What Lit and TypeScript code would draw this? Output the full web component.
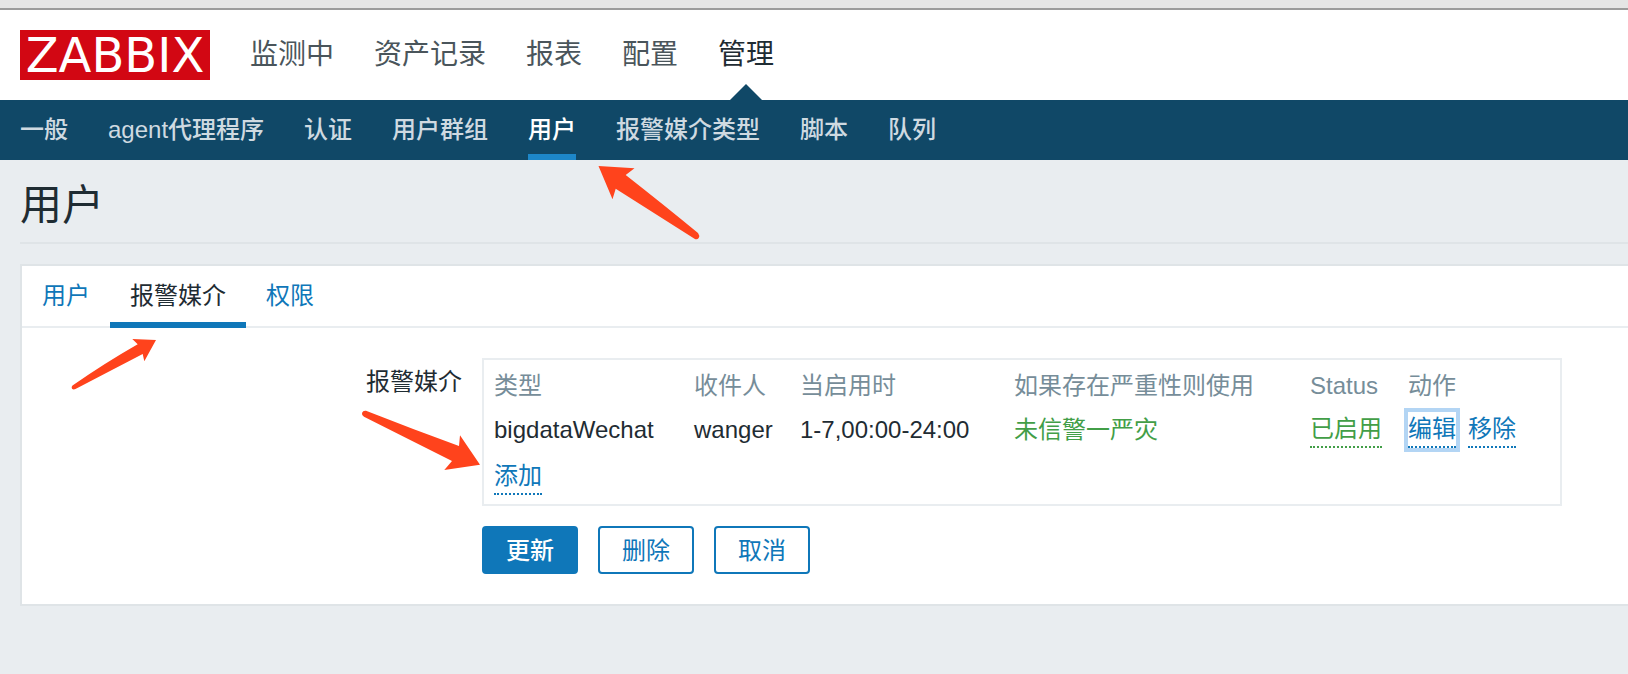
import { LitElement, html, css } from "lit";
import { customElement } from "lit/decorators.js";
import { classMap } from "lit/directives/class-map.js";

const MAIN = ["监测中", "资产记录", "报表", "配置", "管理"];
const SUB = ["一般", "agent代理程序", "认证", "用户群组", "用户", "报警媒介类型", "脚本", "队列"];
const TABS = ["用户", "报警媒介", "权限"];

@customElement("app-root")
export class AppRoot extends LitElement {
  static styles = css`
    :host {
      display: block;
      position: relative;
      min-height: 100vh;
      overflow: hidden;
      background: #e9edf0;
      color: #1f2c33;
      font: 24px/32px "Liberation Sans", "Noto Sans CJK SC", sans-serif;
    }
    * { box-sizing: border-box; }
    a { color: inherit; text-decoration: none; }
    .chrome { height: 10px; background: #e5e5e5; border-bottom: 2px solid #9b9b9b; }
    .header {
      display: flex;
      align-items: center;
      gap: 40px;
      height: 90px;
      padding: 0 20px;
      background: #fff;
    }
    .logo {
      width: 190px;
      height: 50px;
      background: #d20713;
      color: #fff;
      font: 48px/50px "DejaVu Sans", sans-serif;
      text-align: center;
    }
    .main { display: flex; gap: 40px; height: 90px; font-size: 28px; line-height: 90px; color: #4a555b; }
    .main .on { position: relative; color: #1f2c33; }
    .main .on::after {
      content: "";
      position: absolute;
      left: 50%;
      bottom: 0;
      margin-left: -16px;
      border: 16px solid transparent;
      border-top: 0;
      border-bottom-color: #104867;
    }
    .sub {
      display: flex;
      gap: 40px;
      height: 60px;
      padding: 0 20px;
      background: #104867;
      color: #cfdae1;
      font-weight: 500;
      line-height: 60px;
      white-space: nowrap;
    }
    .sub .on { color: #fff; border-bottom: 6px solid #1d87c9; }
    .title {
      margin: 0 0 20px 20px;
      padding: 16px 0 6px;
      border-bottom: 2px solid #dfe4e7;
      font-size: 42px;
      line-height: 60px;
      font-weight: 400;
    }
    .panel {
      margin-left: 20px;
      background: #fff;
      border: 2px solid #dfe4e7;
      border-right: 0;
    }
    .tabs { display: flex; height: 62px; border-bottom: 2px solid #e9edf0; color: #0f77b9; }
    .tab { height: 62px; padding: 0 20px; line-height: 60px; }
    .tab.on { color: #1f2c33; border-bottom: 6px solid #0f77b9; }
    .form {
      display: grid;
      grid-template-columns: 440px 1fr;
      column-gap: 20px;
      row-gap: 20px;
      padding: 30px 66px 30px 0;
    }
    .label { padding-top: 8px; text-align: right; }
    .box { border: 2px solid #e9edf0; padding: 4px 0 2px 10px; }
    table { width: 100%; border-collapse: collapse; table-layout: fixed; }
    th, td { padding: 0; text-align: left; font-weight: 400; height: 44px; white-space: nowrap; }
    th { color: #768d99; }
    td.add { height: 50px; }
    .c1 { width: 200px; }
    .c2 { width: 106px; }
    .c3 { width: 214px; }
    .c4 { width: 296px; }
    .c5 { width: 98px; }
    .green { color: #429e47; }
    .act {
      display: block;
      padding: 0;
      border: 0;
      border-bottom: 2px dotted currentColor;
      background: none;
      color: #0f77b9;
      font: inherit;
      line-height: 34px;
      outline: 0;
    }
    .act.green { color: #429e47; }
    .act.focus { box-shadow: 0 0 0 4px #b3d5f4; }
    .acts { display: flex; gap: 12px; }
    .buttons { grid-column: 2; display: flex; gap: 20px; }
    .btn {
      height: 48px;
      padding: 2px 22px 0;
      border: 2px solid #0f77b9;
      border-radius: 4px;
      background: #fff;
      color: #0f77b9;
      font: inherit;
    }
    .btn.primary { background: #0f77b9; color: #fff; font-weight: 500; }
    .marks { position: absolute; left: 0; top: 0; pointer-events: none; fill: #ff431c; }
  `;

  render() {
    return html`
      <div class="chrome"></div>
      <header class="header">
        <a class="logo" href="#">ZABBIX</a>
        <nav class="main">
          ${MAIN.map((t) => html`<a href="#" class=${classMap({ on: t === "管理" })}>${t}</a>`)}
        </nav>
      </header>
      <nav class="sub">
        ${SUB.map((t) => html`<a href="#" class=${classMap({ on: t === "用户" })}>${t}</a>`)}
      </nav>
      <h1 class="title">用户</h1>
      <main class="panel">
        <nav class="tabs">
          ${TABS.map((t) => html`<a href="#" class=${classMap({ tab: true, on: t === "报警媒介" })}>${t}</a>`)}
        </nav>
        <div class="form">
          <div class="label" id="media">报警媒介</div>
          <div class="box">
            <table aria-labelledby="media">
              <colgroup>
                <col class="c1" /><col class="c2" /><col class="c3" /><col class="c4" /><col class="c5" /><col />
              </colgroup>
              <thead>
                <tr><th>类型</th><th>收件人</th><th>当启用时</th><th>如果存在严重性则使用</th><th>Status</th><th>动作</th></tr>
              </thead>
              <tbody>
                <tr>
                  <td>bigdataWechat</td>
                  <td>wanger</td>
                  <td>1-7,00:00-24:00</td>
                  <td class="green">未信警一严灾</td>
                  <td><button class="act green">已启用</button></td>
                  <td><div class="acts"><button class="act focus">编辑</button><button class="act">移除</button></div></td>
                </tr>
                <tr><td class="add" colspan="6"><button class="act">添加</button></td></tr>
              </tbody>
            </table>
          </div>
          <div class="buttons">
            <button class="btn primary">更新</button>
            <button class="btn">删除</button>
            <button class="btn">取消</button>
          </div>
        </div>
      </main>
      <svg class="marks" width="720" height="480" viewBox="0 0 720 480" aria-hidden="true">
        <path d="M598.5 166 634.5 168.3 625.7 175 Q664 205 698 233 Q700 235.5 698.7 238 Q697 240.3 694.5 238.7 L615.7 188.7 612.5 199.3Z" />
        <path d="M156 340 132.3 339 137.7 344.3 Q105 363 72.5 385.5 Q71 387 72 388.8 Q73.5 390 75.5 389 Q110 371 142.7 354 L144.3 361.3Z" />
        <path d="M480 464.7 460 435.3 459 446 Q412 429 366 410.8 Q363 410.3 362 413 Q361.5 415.5 364 416.8 Q408 439 452 461 L444.3 470Z" />
      </svg>
    `;
  }
}
